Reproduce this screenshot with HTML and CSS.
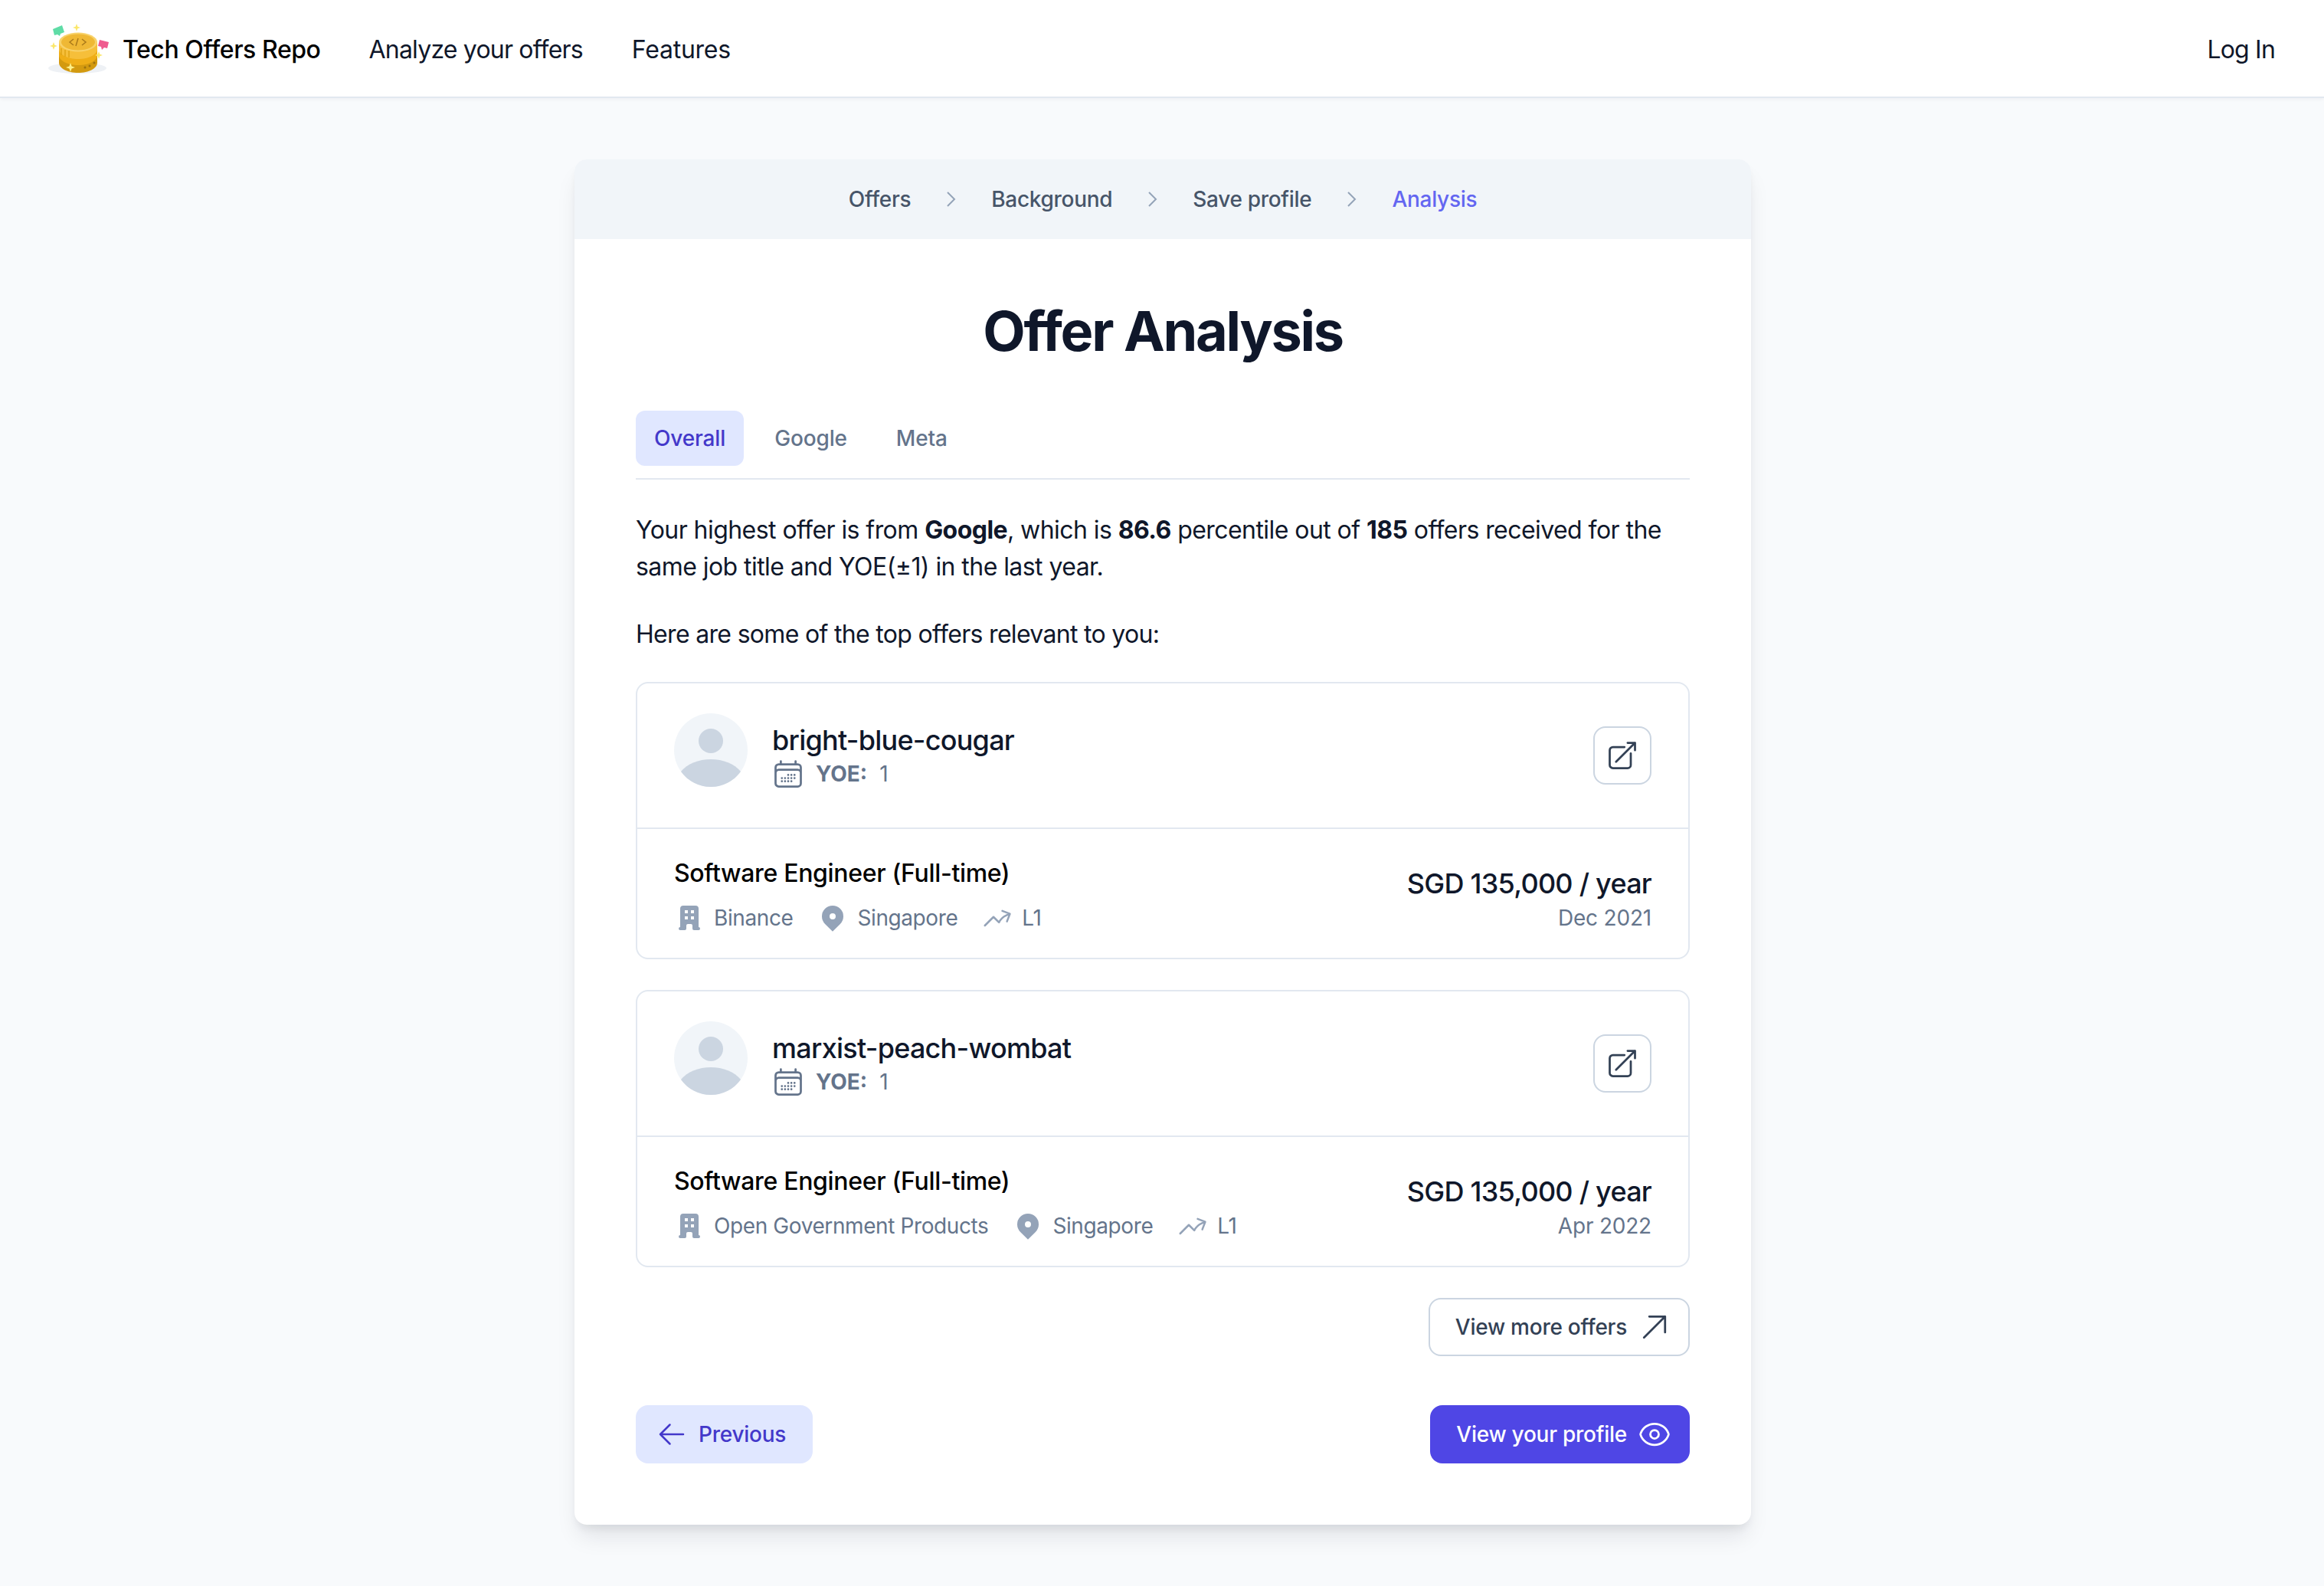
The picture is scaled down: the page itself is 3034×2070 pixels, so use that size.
FILE: index.html
```html
<!DOCTYPE html>
<html lang="en">

<head>
  <meta charset="UTF-8">
  <title>Tech Offers Repo</title>
  <link rel="stylesheet" href="styles.css">
</head>

<body>
  <!-- Top navigation -->
  <header class="navbar">
    <a class="brand">
      <svg class="brand-logo" viewBox="0 0 90 72">
        <ellipse cx="41" cy="59" rx="38" ry="7" fill="#eef1f5" />
        <path d="M17 33v19c0 7 11 13 25 13s25-6 25-13V33z" fill="#d39a10" />
        <path d="M17 33v9c0 7 11 13 25 13s25-6 25-13V33z" fill="#efae17" />
        <path d="M17 25v9c0 7 11 13 25 13s25-6 25-13v-9z" fill="#f6bf3a" />
        <ellipse cx="42" cy="25" rx="25" ry="12.500" fill="#f8d26a" />
        <ellipse cx="42" cy="25" rx="22" ry="10.500" fill="#efb835" />
        <path d="M36 21l-5 4 5 4M47 21l5 4-5 4M39 30l3-10" fill="none" stroke="#a9791a" stroke-width="1.500" />
        <path d="M20 33v9M25 35v9M30 36v9" stroke="#e0a416" stroke-width="1.500" />
        <circle cx="51" cy="58" r="1.500" fill="#9c7210" />
        <circle cx="57" cy="56" r="1.500" fill="#9c7210" />
        <circle cx="63" cy="52" r="1.500" fill="#9c7210" />
        <path d="M9 8l12-5 3 9-5 2-1 3-3-2-4 1z" fill="#5fdca6" />
        <path d="M70 22l12 3-2 8-4-1-3 3-1-4-4-1z" fill="#ef5b8f" />
        <path d="M40 1l1.300 3.700L45 6l-3.700 1.300L40 11l-1.300-3.700L35 6l3.700-1.300z" fill="#fbe76a" />
        <path d="M10 25l1.300 3.700L15 30l-3.700 1.300L10 35l-1.300-3.700L5 30l3.700-1.300z" fill="#fbe76a" />
        <path d="M69 37l1.300 3.700L74 42l-3.700 1.300L69 47l-1.300-3.700L64 42l3.700-1.300z" fill="#fbe76a" />
        <path d="M32 52l1.600 4.400L38 58l-4.400 1.600L32 64l-1.600-4.400L26 58l4.400-1.600z" fill="#fdf08a" />
      </svg>
      <span class="brand-name">Tech Offers Repo</span>
    </a>
    <nav class="nav-links">
      <a>Analyze your offers</a>
      <a class="nav-features">Features</a>
    </nav>
    <a class="login">Log In</a>
  </header>

  <main class="page">
    <section class="panel">
      <!-- Steps -->
      <ol class="steps">
        <li>Offers</li>
        <li class="step-sep"><svg viewBox="0 0 13 20"><path d="M2 1l9 9-9 9" /></svg></li>
        <li>Background</li>
        <li class="step-sep"><svg viewBox="0 0 13 20"><path d="M2 1l9 9-9 9" /></svg></li>
        <li>Save profile</li>
        <li class="step-sep"><svg viewBox="0 0 13 20"><path d="M2 1l9 9-9 9" /></svg></li>
        <li class="step-current">Analysis</li>
      </ol>

      <div class="panel-body">
        <h1 class="title">Offer Analysis</h1>

        <div class="tabs">
          <a class="tab tab-active">Overall</a>
          <a class="tab">Google</a>
          <a class="tab">Meta</a>
        </div>

        <p class="summary">Your highest offer is from <b>Google</b>, which is <b>86.6</b> percentile out of <b>185</b> offers received for the same job title and YOE(±1) in the last year.</p>
        <p class="summary-sub">Here are some of the top offers relevant to you:</p>

        <!-- Offer 1 -->
        <article class="offer">
          <div class="offer-top">
            <svg class="avatar" viewBox="0 0 96 96">
              <circle cx="48" cy="48" r="48" fill="#f1f5f9" />
              <circle cx="48" cy="36" r="16" fill="#cbd5e1" />
              <path d="M9 76C17 66 32 60 48 60s31 6 39 16A48 48 0 0 1 9 76z" fill="#cbd5e1" />
            </svg>
            <div class="who">
              <div class="who-name">bright-blue-cougar</div>
              <div class="who-yoe">
                <svg class="icon-cal" viewBox="0 0 24 24" fill="none" stroke="currentColor" stroke-width="1.5"><path stroke-linecap="round" stroke-linejoin="round" d="M6.750 3v2.250M17.250 3v2.250M3 18.750V7.500a2.250 2.250 0 012.250-2.250h13.500A2.250 2.250 0 0121 7.500v11.250m-18 0A2.250 2.250 0 005.250 21h13.500A2.250 2.250 0 0021 18.750m-18 0v-7.500A2.250 2.250 0 015.250 9h13.500A2.250 2.250 0 0121 11.250v7.500m-9-6h.008v.008H12v-.008zM12 15h.008v.008H12V15zm0 2.250h.008v.008H12v-.008zM9.750 15h.008v.008H9.750V15zm0 2.250h.008v.008H9.750v-.008zM7.500 15h.008v.008H7.500V15zm0 2.250h.008v.008H7.500v-.008zm6.750-4.500h.008v.008h-.008v-.008zm0 2.250h.008v.008h-.008V15zm0 2.250h.008v.008h-.008v-.008zm2.250-4.500h.008v.008H16.500v-.008zm0 2.250h.008v.008H16.500V15z" /></svg>
                <b>YOE:</b><span>1</span>
              </div>
            </div>
            <a class="open-btn">
              <svg viewBox="0 0 24 24" fill="none" stroke="currentColor" stroke-width="1.5"><path stroke-linecap="round" stroke-linejoin="round" d="M13.500 6H5.250A2.250 2.250 0 003 8.250v10.500A2.250 2.250 0 005.250 21h10.500A2.250 2.250 0 0018 18.750V10.500m-10.500 6L21 3m0 0h-5.250M21 3v5.250" /></svg>
            </a>
          </div>
          <div class="offer-bottom">
            <div class="job">
              <div class="job-title">Software Engineer (Full-time)</div>
              <div class="job-meta">
                <span class="meta"><svg class="icon-solid" viewBox="0 0 20 20"><path fill-rule="evenodd" clip-rule="evenodd" d="M4 4a2 2 0 012-2h8a2 2 0 012 2v12a1 1 0 110 2h-3a1 1 0 01-1-1v-2a1 1 0 00-1-1H9a1 1 0 00-1 1v2a1 1 0 01-1 1H4a1 1 0 110-2V4zm3 1h2v2H7V5zm2 4H7v2h2V9zm2-4h2v2h-2V5zm2 4h-2v2h2V9z" /></svg>Binance</span>
                <span class="meta"><svg class="icon-solid" viewBox="0 0 20 20"><path fill-rule="evenodd" clip-rule="evenodd" d="M5.050 4.050a7 7 0 119.900 9.900L10 18.900l-4.950-4.950a7 7 0 010-9.900zM10 11a2 2 0 100-4 2 2 0 000 4z" /></svg>Singapore</span>
                <span class="meta"><svg class="icon-trend" viewBox="0 0 24 24" fill="none" stroke="currentColor" stroke-width="1.5"><path stroke-linecap="round" stroke-linejoin="round" d="M2.250 18L9 11.250l4.306 4.307a11.950 11.950 0 015.814-5.519l2.740-1.220m0 0l-5.940-2.280m5.940 2.280l-2.280 5.941" /></svg>L1</span>
              </div>
            </div>
            <div class="pay">
              <div class="pay-amount">SGD 135,000 / year</div>
              <div class="pay-date">Dec 2021</div>
            </div>
          </div>
        </article>

        <!-- Offer 2 -->
        <article class="offer">
          <div class="offer-top">
            <svg class="avatar" viewBox="0 0 96 96">
              <circle cx="48" cy="48" r="48" fill="#f1f5f9" />
              <circle cx="48" cy="36" r="16" fill="#cbd5e1" />
              <path d="M9 76C17 66 32 60 48 60s31 6 39 16A48 48 0 0 1 9 76z" fill="#cbd5e1" />
            </svg>
            <div class="who">
              <div class="who-name">marxist-peach-wombat</div>
              <div class="who-yoe">
                <svg class="icon-cal" viewBox="0 0 24 24" fill="none" stroke="currentColor" stroke-width="1.5"><path stroke-linecap="round" stroke-linejoin="round" d="M6.750 3v2.250M17.250 3v2.250M3 18.750V7.500a2.250 2.250 0 012.250-2.250h13.500A2.250 2.250 0 0121 7.500v11.250m-18 0A2.250 2.250 0 005.250 21h13.500A2.250 2.250 0 0021 18.750m-18 0v-7.500A2.250 2.250 0 015.250 9h13.500A2.250 2.250 0 0121 11.250v7.500m-9-6h.008v.008H12v-.008zM12 15h.008v.008H12V15zm0 2.250h.008v.008H12v-.008zM9.750 15h.008v.008H9.750V15zm0 2.250h.008v.008H9.750v-.008zM7.500 15h.008v.008H7.500V15zm0 2.250h.008v.008H7.500v-.008zm6.750-4.500h.008v.008h-.008v-.008zm0 2.250h.008v.008h-.008V15zm0 2.250h.008v.008h-.008v-.008zm2.250-4.500h.008v.008H16.500v-.008zm0 2.250h.008v.008H16.500V15z" /></svg>
                <b>YOE:</b><span>1</span>
              </div>
            </div>
            <a class="open-btn">
              <svg viewBox="0 0 24 24" fill="none" stroke="currentColor" stroke-width="1.5"><path stroke-linecap="round" stroke-linejoin="round" d="M13.500 6H5.250A2.250 2.250 0 003 8.250v10.500A2.250 2.250 0 005.250 21h10.500A2.250 2.250 0 0018 18.750V10.500m-10.500 6L21 3m0 0h-5.250M21 3v5.250" /></svg>
            </a>
          </div>
          <div class="offer-bottom">
            <div class="job">
              <div class="job-title">Software Engineer (Full-time)</div>
              <div class="job-meta">
                <span class="meta"><svg class="icon-solid" viewBox="0 0 20 20"><path fill-rule="evenodd" clip-rule="evenodd" d="M4 4a2 2 0 012-2h8a2 2 0 012 2v12a1 1 0 110 2h-3a1 1 0 01-1-1v-2a1 1 0 00-1-1H9a1 1 0 00-1 1v2a1 1 0 01-1 1H4a1 1 0 110-2V4zm3 1h2v2H7V5zm2 4H7v2h2V9zm2-4h2v2h-2V5zm2 4h-2v2h2V9z" /></svg>Open Government Products</span>
                <span class="meta"><svg class="icon-solid" viewBox="0 0 20 20"><path fill-rule="evenodd" clip-rule="evenodd" d="M5.050 4.050a7 7 0 119.900 9.900L10 18.900l-4.950-4.950a7 7 0 010-9.900zM10 11a2 2 0 100-4 2 2 0 000 4z" /></svg>Singapore</span>
                <span class="meta"><svg class="icon-trend" viewBox="0 0 24 24" fill="none" stroke="currentColor" stroke-width="1.5"><path stroke-linecap="round" stroke-linejoin="round" d="M2.250 18L9 11.250l4.306 4.307a11.950 11.950 0 015.814-5.519l2.740-1.220m0 0l-5.940-2.280m5.940 2.280l-2.280 5.941" /></svg>L1</span>
              </div>
            </div>
            <div class="pay">
              <div class="pay-amount">SGD 135,000 / year</div>
              <div class="pay-date">Apr 2022</div>
            </div>
          </div>
        </article>

        <div class="more-row">
          <a class="btn btn-outline">View more offers
            <svg viewBox="0 0 24 24" fill="none" stroke="currentColor" stroke-width="1.5"><path stroke-linecap="round" stroke-linejoin="round" d="M4.500 19.500l15-15m0 0H8.250m11.250 0v11.250" /></svg>
          </a>
        </div>

        <div class="actions">
          <a class="btn btn-soft">
            <svg viewBox="0 0 24 24" fill="none" stroke="currentColor" stroke-width="1.5"><path stroke-linecap="round" stroke-linejoin="round" d="M10.500 19.500L3 12m0 0l7.500-7.500M3 12h18" /></svg>
            Previous
          </a>
          <a class="btn btn-primary">View your profile
            <svg viewBox="0 0 24 24" fill="none" stroke="currentColor" stroke-width="1.5"><path stroke-linecap="round" stroke-linejoin="round" d="M2.036 12.322a1.012 1.012 0 010-.639C3.423 7.510 7.360 4.500 12 4.500c4.638 0 8.573 3.007 9.963 7.178.07.207.07.431 0 .639C20.577 16.490 16.640 19.500 12 19.500c-4.638 0-8.573-3.007-9.963-7.178z" /><path stroke-linecap="round" stroke-linejoin="round" d="M15 12a3 3 0 11-6 0 3 3 0 016 0z" /></svg>
          </a>
        </div>
      </div>
    </section>
  </main>
</body>

</html>
```

FILE: styles.css
```css
* {
  box-sizing: border-box;
}

html,
body {
  height: 100%;
}

body {
  margin: 0;
  background: #f8fafc;
  color: #0f172a;
  font-family: Inter, "Liberation Sans", sans-serif;
  overflow: hidden;
}

/* Navbar */
.navbar {
  display: flex;
  align-items: center;
  height: 128px;
  padding: 2px 64px 0 60px;
  background: white;
  border-bottom: 2px solid #e2e8f0;
  box-shadow: 0 2px 4px rgba(15, 23, 42, 0.04);
}

.brand {
  display: flex;
  align-items: center;
}

.brand-logo {
  width: 90px;
  height: 72px;
  margin-top: 4px;
  margin-right: 10px;
}

.brand-name {
  font-size: 32px;
  font-weight: 500;
  letter-spacing: -0.42px;
  color: #000;
}

.nav-links {
  display: flex;
  gap: 64px;
  margin-left: 63px;
  font-size: 32px;
  letter-spacing: -0.8px;
}

.nav-features {
  letter-spacing: -0.25px;
}

.login {
  margin-left: auto;
  font-size: 32px;
  letter-spacing: -0.8px;
}

/* Main panel */
.page {
  display: flex;
  justify-content: center;
  padding-top: 80px;
  padding-left: 2px;
}

.panel {
  width: 1536px;
  height: 1782px;
  background: white;
  border-radius: 16px;
  box-shadow: 0 20px 30px -6px rgba(15, 23, 42, 0.1), 0 8px 12px -4px rgba(15, 23, 42, 0.08);
  overflow: hidden;
}

.steps {
  display: flex;
  justify-content: center;
  align-items: center;
  gap: 46px;
  height: 104px;
  margin: 0;
  padding: 0;
  list-style: none;
  background: #f1f5f9;
  font-size: 28px;
  font-weight: 500;
  letter-spacing: -0.3px;
  color: #475569;
}

.step-sep {
  display: flex;
}

.step-sep svg {
  width: 13px;
  height: 20px;
  fill: none;
  stroke: #94a3b8;
  stroke-width: 2;
}

.step-current {
  color: #6366f1;
}

.panel-body {
  padding: 0 80px;
}

.title {
  margin: 0;
  padding-top: 80px;
  height: 224px;
  text-align: center;
  font-size: 72px;
  line-height: 80px;
  font-weight: 700;
  letter-spacing: -2.3px;
}

.tabs {
  display: flex;
  gap: 16px;
  padding-bottom: 16px;
  border-bottom: 2px solid #e2e8f0;
}

.tab {
  padding: 0 24px;
  height: 72px;
  line-height: 72px;
  border-radius: 12px;
  font-size: 28px;
  font-weight: 500;
  letter-spacing: -0.15px;
  color: #64748b;
}

.tab-active {
  background: #e0e7ff;
  color: #4338ca;
}

.summary {
  margin: 42px 0 0;
  font-size: 32px;
  line-height: 48px;
  letter-spacing: -0.56px;
}

.summary b,
.who-yoe b {
  font-weight: 700;
}

.summary-sub {
  margin: 40px 0 0;
  font-size: 32px;
  line-height: 48px;
  letter-spacing: -0.68px;
}

/* Offer cards */
.offer {
  margin-top: 38px;
  border: 2px solid #e2e8f0;
  border-radius: 16px;
}

.offer + .offer {
  margin-top: 40px;
}

.offer-top {
  display: flex;
  align-items: center;
  height: 190px;
  padding: 0 48px;
  border-bottom: 2px solid #e2e8f0;
}

.avatar {
  width: 96px;
  height: 96px;
  margin-top: -14px;
  margin-right: 32px;
  flex: none;
}

.who-name {
  margin-top: 2px;
  font-size: 36px;
  line-height: 44px;
  font-weight: 500;
  letter-spacing: -0.75px;
}

.who-yoe {
  display: flex;
  align-items: center;
  gap: 14px;
  margin-top: 2px;
  font-size: 28px;
  line-height: 40px;
  color: #64748b;
}

.who-yoe b {
  margin-right: 2px;
}

.icon-cal {
  width: 44px;
  height: 44px;
  margin: -2px 0 -2px -1px;
}

.open-btn {
  display: flex;
  align-items: center;
  justify-content: center;
  width: 76px;
  height: 76px;
  margin-left: auto;
  border: 2px solid #cbd5e1;
  border-radius: 16px;
  color: #334155;
}

.open-btn svg {
  width: 44px;
  height: 44px;
}

.offer-bottom {
  display: flex;
  justify-content: space-between;
  padding: 34px 48px 0;
  height: 168px;
}

.job-title {
  font-size: 32px;
  line-height: 48px;
  font-weight: 500;
  letter-spacing: -0.33px;
  color: #000;
}

.job-meta {
  display: flex;
  gap: 32px;
  margin-top: 14px;
  font-size: 28px;
  line-height: 40px;
  letter-spacing: -0.4px;
  color: #64748b;
}

.meta {
  display: flex;
  align-items: center;
  gap: 12px;
}

.icon-solid {
  width: 40px;
  height: 40px;
  fill: #94a3b8;
}

.icon-trend {
  width: 40px;
  height: 40px;
  color: #94a3b8;
}

.pay {
  text-align: right;
  margin-top: 13px;
}

.pay-amount {
  font-size: 36px;
  line-height: 48px;
  font-weight: 500;
  letter-spacing: -0.75px;
}

.pay-date {
  margin-top: 1px;
  font-size: 28px;
  line-height: 40px;
  letter-spacing: -0.2px;
  color: #64748b;
}

/* Buttons */
.btn {
  display: flex;
  align-items: center;
  height: 76px;
  border-radius: 16px;
  font-size: 28px;
  font-weight: 500;
  letter-spacing: -0.25px;
}

.btn svg {
  width: 44px;
  height: 44px;
}

.more-row {
  display: flex;
  justify-content: flex-end;
  margin-top: 40px;
}

.btn-outline {
  gap: 14px;
  padding: 0 22px 0 33px;
  border: 2px solid #cbd5e1;
  color: #334155;
}

.actions {
  display: flex;
  justify-content: space-between;
  margin-top: 64px;
}

.btn-soft {
  gap: 15px;
  padding: 0 35px 0 27px;
  background: #e0e7ff;
  color: #4338ca;
}

.btn-soft svg {
  width: 40px;
  height: 40px;
}

.btn-primary {
  gap: 14px;
  padding: 0 24px 0 34px;
  background: #4f46e5;
  color: white;
}
```
